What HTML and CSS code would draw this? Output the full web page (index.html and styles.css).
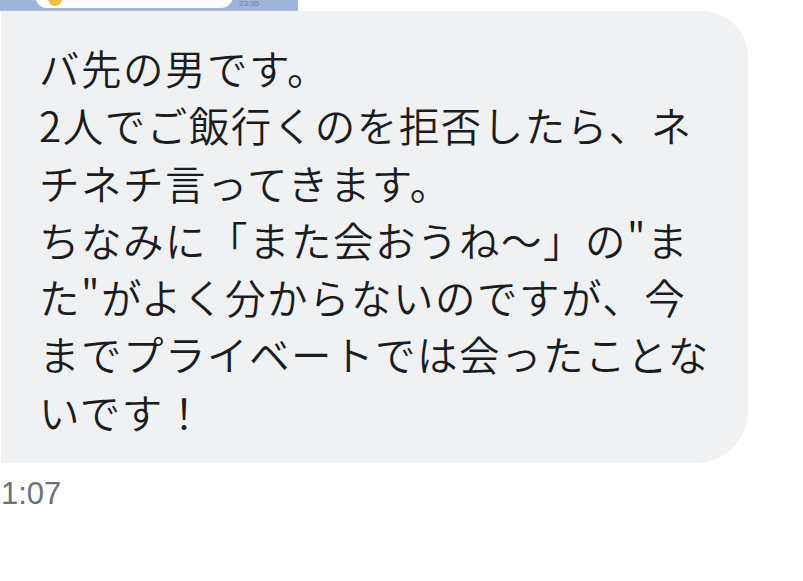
FILE: index.html
```html
<!DOCTYPE html>
<html lang="ja">
<head>
<meta charset="utf-8">
<link rel="stylesheet" href="styles.css">
</head>
<body>
<div class="page">
  <div class="prev-image">
    <div class="prev-card"><span class="prev-emoji"></span></div>
    <span class="prev-time">23:35</span>
  </div>
  <div class="bubble">
    <p class="message">バ先の男です。<br>2人でご飯行くのを拒否したら、ネ<br>チネチ言ってきます。<br>ちなみに「また会おうね〜」の"ま<br>た"がよく分からないのですが、今<br>までプライベートでは会ったことな<br>いです！</p>
  </div>
  <div class="time">1:07</div>
</div>
</body>
</html>
```

FILE: styles.css
```css
html, body {
  margin: 0;
  padding: 0;
  background: #ffffff;
}
.page {
  width: 803px;
  height: 581px;
  overflow: hidden;
  display: flex;
  flex-direction: column;
  align-items: flex-start;
}
.prev-image {
  width: 298px;
  height: 10px;
  background: #9fb2dc;
  border-bottom: 1px solid #b9c3d3;
  display: flex;
  align-items: flex-end;
  position: relative;
  overflow: hidden;
}
.prev-card {
  margin-left: 35px;
  width: 198px;
  height: 18px;
  margin-bottom: 2px;
  background: #ffffff;
  border-radius: 0 0 12px 12px;
  position: relative;
}
.prev-emoji {
  position: absolute;
  left: 13px;
  bottom: 2px;
  width: 14px;
  height: 10px;
  border-radius: 0 0 7px 7px;
  background: #f2c04a;
}
.prev-time {
  margin-left: 6px;
  margin-bottom: 2px;
  font-family: "Liberation Sans", sans-serif;
  font-size: 8px;
  color: #6d7fae;
  line-height: 8px;
}
.bubble {
  margin-left: 1px;
  width: 747px;
  height: 452px;
  box-sizing: border-box;
  background: #eff1f3;
  border-radius: 0 46px 52px 0;
  padding: 28px 0 0 38px;
}
.message {
  margin: 0;
  font-family: "Noto Sans CJK JP", "Noto Sans", sans-serif;
  font-size: 40.5px;
  font-weight: 350;
  letter-spacing: 1.5px;
  line-height: 57.3px;
  color: #1b1c1e;
  white-space: nowrap;
}
.time {
  margin-top: 13px;
  margin-left: 1px;
  font-family: "Liberation Sans", "Helvetica", sans-serif;
  font-size: 31px;
  line-height: 36px;
  color: #6e7177;
}
```
